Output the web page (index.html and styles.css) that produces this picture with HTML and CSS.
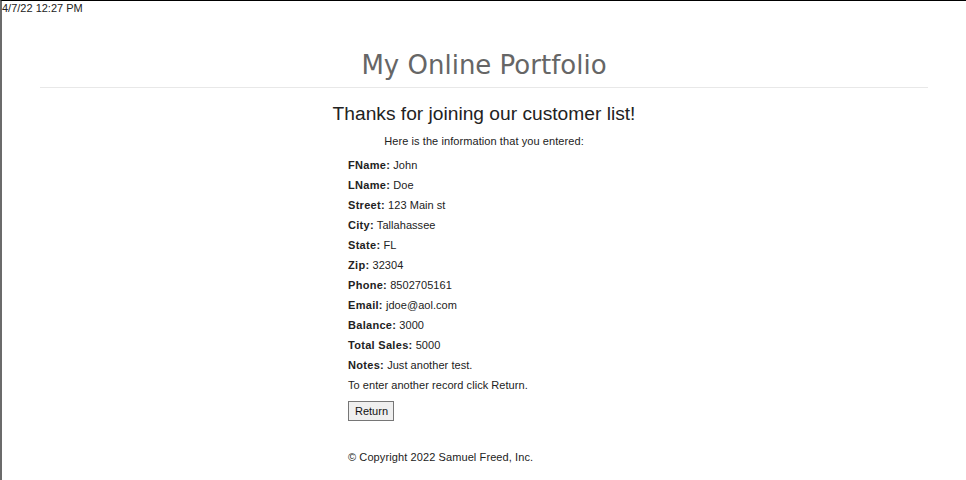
FILE: index.html
```html
<!DOCTYPE html>
<html>
<head>
<meta charset="utf-8">
<link rel="stylesheet" href="styles.css">
</head>
<body>
<div class="page">
  <div class="stamp">4/7/22 12:27 PM</div>
  <header class="site-header">
    <h1 class="site-title">My Online Portfolio</h1>
  </header>
  <hr class="rule">
  <main class="content">
    <h2 class="thanks">Thanks for joining our customer list!</h2>
    <p class="intro">Here is the information that you entered:</p>
    <div class="record">
      <p class="field"><b>FName:</b> John</p>
      <p class="field"><b>LName:</b> Doe</p>
      <p class="field"><b>Street:</b> 123 Main st</p>
      <p class="field"><b>City:</b> Tallahassee</p>
      <p class="field"><b>State:</b> FL</p>
      <p class="field"><b>Zip:</b> 32304</p>
      <p class="field"><b>Phone:</b> 8502705161</p>
      <p class="field"><b>Email:</b> jdoe@aol.com</p>
      <p class="field"><b>Balance:</b> 3000</p>
      <p class="field"><b>Total Sales:</b> 5000</p>
      <p class="field"><b>Notes:</b> Just another test.</p>
      <p class="field">To enter another record click Return.</p>
      <div class="actions"><button class="btn" type="button">Return</button></div>
      <p class="copy">© Copyright 2022 Samuel Freed, Inc.</p>
    </div>
  </main>
</div>
</body>
</html>
```
FILE: styles.css
```css
html, body {
  margin: 0;
  padding: 0;
  background: #fff;
}
body {
  font-family: "Liberation Sans", Arial, sans-serif;
  color: #222;
  font-size: 11px;
}
.page {
  width: 964px;
  height: 479px;
  border-top: 1px solid #000;
  border-left: 2px solid #6b6b6b;
  overflow: hidden;
}
.stamp {
  font-size: 11px;
  line-height: 13px;
  padding: 1px 0 0 0;
  color: #222;
}
.site-header {
  text-align: center;
}
.site-title {
  margin: 0;
  padding-top: 30px;
  font-family: "DejaVu Sans", "Open Sans", sans-serif;
  font-weight: normal;
  font-size: 26px;
  line-height: 40px;
  color: #666;
}
.rule {
  margin: 2px 38px 0;
  border: 0;
  border-top: 1px solid #e8e8e8;
  height: 0;
}
.content {
  text-align: center;
}
.thanks {
  margin: 14px 0 0;
  font-weight: normal;
  font-size: 19.2px;
  line-height: 24px;
  color: #222;
}
.intro {
  margin: 8px 0 0;
  font-size: 11px;
  line-height: 14px;
  letter-spacing: 0.08px;
}
.record {
  width: 272px;
  margin: 0 auto;
  text-align: left;
  padding-top: 7px;
}
.field {
  margin: 0;
  line-height: 20px;
  font-size: 11px;
  letter-spacing: 0.05px;
}
.field b {
  letter-spacing: 0.3px;
}
.actions {
  padding-top: 6px;
}
.btn {
  font-family: "Liberation Sans", Arial, sans-serif;
  font-size: 11px;
  color: #111;
  background: #efefef;
  border: 1px solid #767676;
  border-radius: 0;
  padding: 2px 6px;
  height: 20px;
  line-height: 14px;
  box-sizing: border-box;
  width: 46px;
}
.copy {
  margin: 29px 0 0;
  line-height: 14px;
  letter-spacing: 0.1px;
}
```
